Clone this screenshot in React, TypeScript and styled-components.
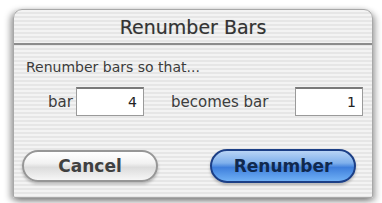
import styled, { createGlobalStyle } from 'styled-components'

const GlobalStyle = createGlobalStyle`
  html, body {
    margin: 0;
    padding: 0;
    background: #ffffff;
  }
  body {
    font-family: "DejaVu Sans", "Liberation Sans", sans-serif;
  }
`

const stripes = `repeating-linear-gradient(
  to bottom,
  #f3f3f3 0px,
  #f3f3f3 2px,
  #e6e6e6 2px,
  #e6e6e6 4px
)`

const Page = styled.div`
  width: 382px;
  height: 203px;
  padding: 9px 0 0 13px;
  box-sizing: border-box;
`
const Window = styled.div`
  width: 360px;
  height: 189px;
  box-sizing: border-box;
  display: flex;
  flex-direction: column;
  background: ${stripes};
  border: 1px solid #a8a8a8;
  border-radius: 9px 9px 2px 2px;
  box-shadow: -3px 2px 6px rgba(0, 0, 0, 0.35), 3px 3px 6px rgba(0, 0, 0, 0.3);
  overflow: hidden;
`
const TitleBar = styled.div`
  height: 33px;
  flex-shrink: 0;
  display: flex;
  align-items: center;
  justify-content: center;
  border-bottom: 2px solid #8c8c8c;
  font-size: 19px;
  color: #333;
  text-shadow: 0 0 1px rgba(0, 0, 0, 0.25);
`
const Body = styled.div`
  display: flex;
  flex-direction: column;
  padding: 14px 0 0 12px;
  color: #3c3c3c;
`
const Prompt = styled.div`
  height: 17px;
  line-height: 17px;
  font-size: 14px;
`
const FieldRow = styled.div`
  display: flex;
  align-items: center;
  margin-top: 11px;
  height: 29px;
`
const Label = styled.span<{ $width: number; $indent?: number }>`
  width: ${(p) => p.$width}px;
  padding-left: ${(p) => p.$indent || 0}px;
  box-sizing: border-box;
  font-size: 15px;
  flex-shrink: 0;
`
const NumberBox = styled.div`
  width: 68px;
  height: 29px;
  flex-shrink: 0;
  box-sizing: border-box;
  background: #fff;
  border: 1px solid #9a9a9a;
  border-top: 2px solid #7a7a7a;
  display: flex;
  align-items: center;
  justify-content: flex-end;
  padding-right: 6px;
  font-size: 14px;
  color: #222;
`
const Spacer = styled.div<{ $width: number }>`
  width: ${(p) => p.$width}px;
  flex-shrink: 0;
`
const ButtonRow = styled.div`
  display: flex;
  align-items: center;
  margin-top: 33px;
  margin-left: -4px;
`
const Pill = styled.div<{ $primary?: boolean; $width: number }>`
  width: ${(p) => p.$width}px;
  height: ${(p) => (p.$primary ? 34 : 32)}px;
  box-sizing: border-box;
  border-radius: 17px;
  display: flex;
  align-items: center;
  justify-content: center;
  font-size: 17px;
  font-weight: bold;
  color: ${(p) => (p.$primary ? '#10294f' : '#404040')};
  border: 2px solid ${(p) => (p.$primary ? '#1c3f86' : '#969696')};
  background: ${(p) =>
    p.$primary
      ? 'linear-gradient(to bottom, #b8d4f5 0%, #7fb0ec 40%, #3f7fdc 55%, #6fb0f5 100%)'
      : 'linear-gradient(to bottom, #ffffff 0%, #f2f2f2 40%, #dcdcdc 55%, #f6f6f6 100%)'};
  box-shadow: 0 2px 3px rgba(0, 0, 0, 0.25);
`

export default function App() {
  return (
    <>
      <GlobalStyle />
      <Page>
        <Window>
          <TitleBar>Renumber Bars</TitleBar>
          <Body>
            <Prompt>Renumber bars so that...</Prompt>
            <FieldRow>
              <Label $width={50} $indent={22}>bar</Label>
              <NumberBox>4</NumberBox>
              <Spacer $width={27} />
              <Label $width={124}>becomes bar</Label>
              <NumberBox>1</NumberBox>
            </FieldRow>
            <ButtonRow>
              <Pill $width={136}>Cancel</Pill>
              <Spacer $width={52} />
              <Pill $primary $width={146}>Renumber</Pill>
            </ButtonRow>
          </Body>
        </Window>
      </Page>
    </>
  )
}
